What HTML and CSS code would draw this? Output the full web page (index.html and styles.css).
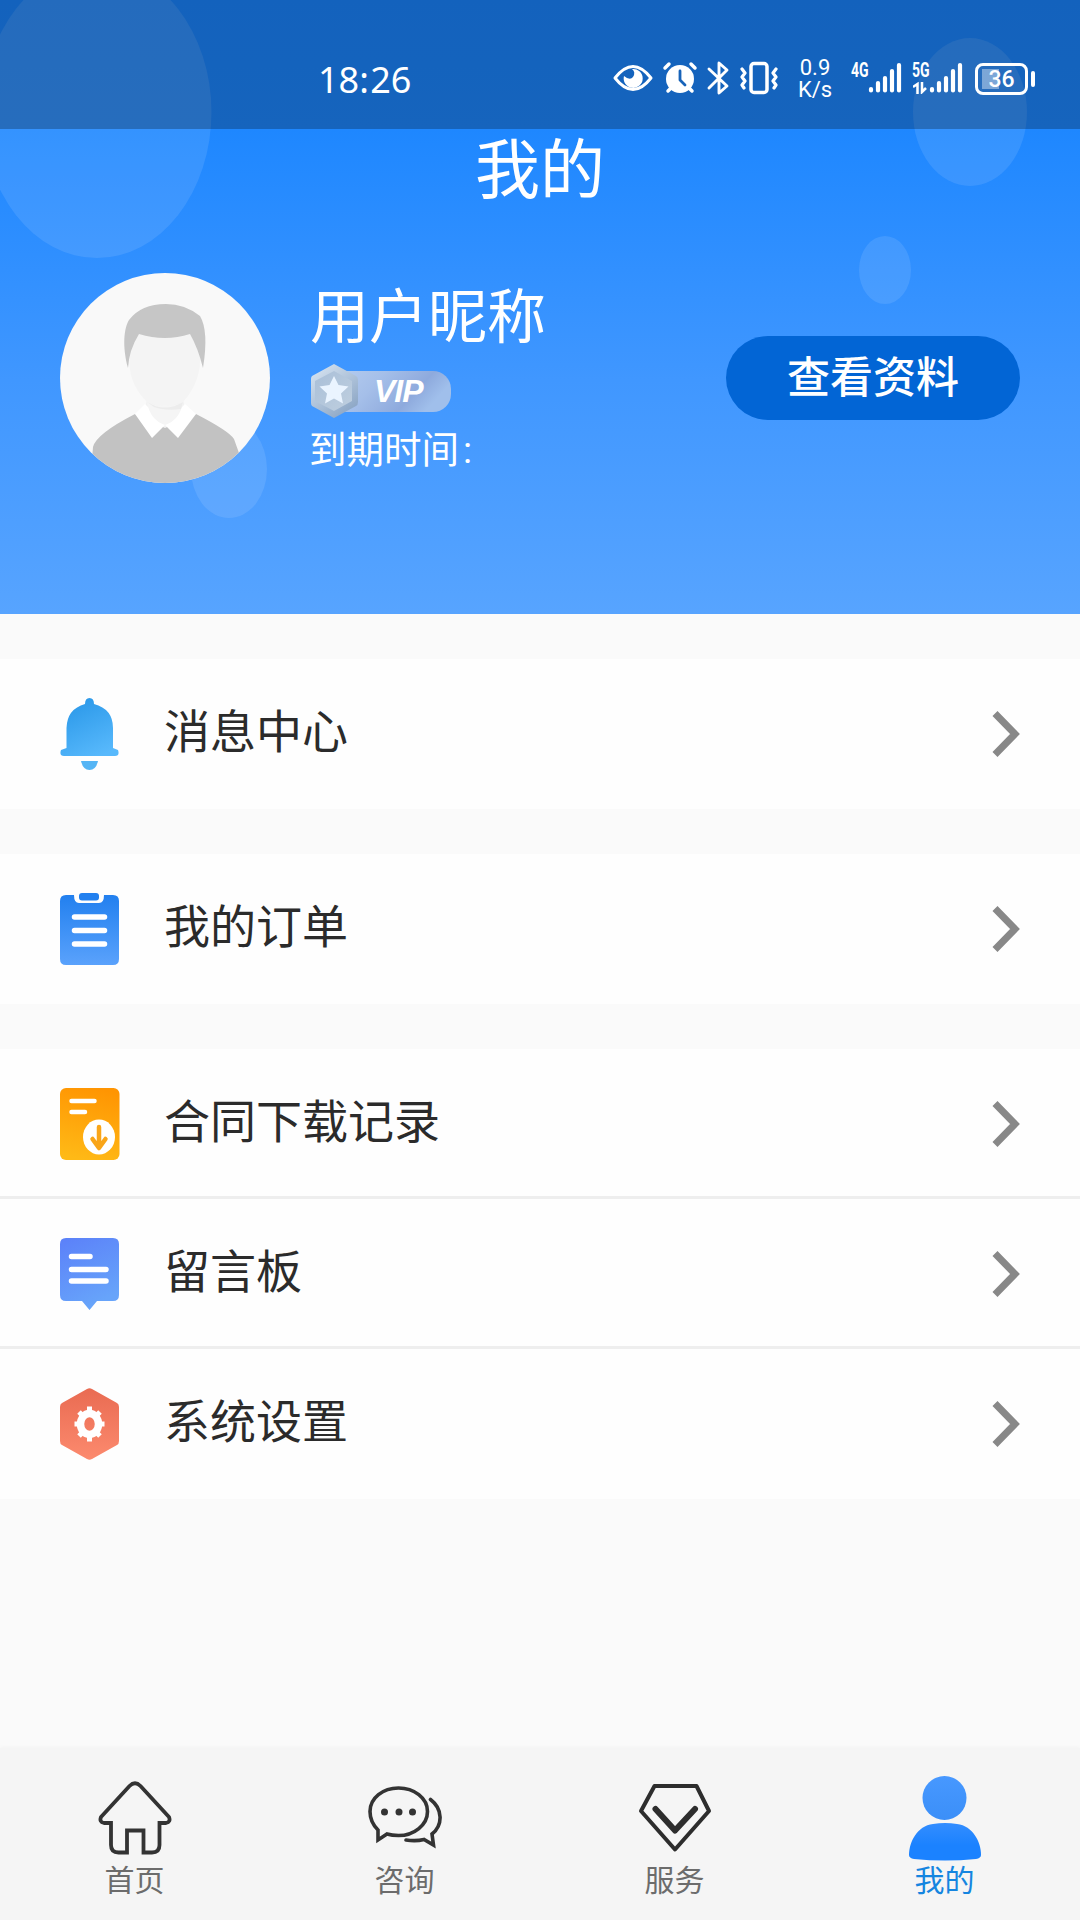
FILE: index.html
```html
<!DOCTYPE html>
<html lang="zh-CN">
<head>
<meta charset="UTF-8">
<title>我的</title>
<link rel="stylesheet" href="styles.css">
</head>
<body>
<div class="screen">
  <header class="hero">
    <svg class="bubbles" viewBox="0 0 1080 614" fill="#fff" fill-opacity=".1">
      <ellipse cx="97" cy="112" rx="114.500" ry="146"/>
      <ellipse cx="970" cy="112" rx="57" ry="74"/>
      <ellipse cx="885" cy="270" rx="26" ry="34"/>
      <ellipse cx="229" cy="469" rx="38" ry="49"/>
    </svg>
    <div class="status">
      <span class="clock"><span>18</span><span class="colon">:</span><span>26</span></span>
      <svg class="status-icons" viewBox="0 0 240 80" fill="none" stroke="#fff" stroke-width="3" stroke-linecap="round" stroke-linejoin="round">
        <path d="M15 38Q24 26.500 33 26.500T51 38Q42 49.500 33 49.500T15 38Z"/>
        <path d="M32 29a9.500 9.500 0 1 1-8 7q6 5 9 1 3-5-1-8Z" fill="#fff" stroke="none"/>
        <circle cx="80" cy="39" r="14" fill="#fff" stroke="none"/>
        <path d="M65 28l4-4M95 28l-4-4M68 51l3-3M92 51l-3-3" stroke-width="3.500"/>
        <path d="M80 31v9l5 5" stroke="#1763b9" stroke-width="2.800"/>
        <path d="M109 29l18 17-8 7V23l8 7-18 18" stroke-width="2.900"/>
        <rect x="151" y="23.500" width="16" height="29" rx="3" stroke-width="3.500"/>
        <path d="M142 29l3 4-3 4 3 4-3 4 2 3M176 29l-3 4 3 4-3 4 3 4-2 3" stroke-width="3.200"/>
      </svg>
      <div class="speed"><span>0.9</span><span>K/s</span></div>
      <div class="signal">
        <span class="net">4G</span>
        <svg class="bars" viewBox="0 0 36 36" stroke="#fff" stroke-width="4.200" stroke-linecap="round"><path d="M3 31v1.500M10 25v7.500M17 20v12.500M24 13v19.500M31 7v25.500"/></svg>
      </div>
      <div class="signal signal-5g">
        <span class="net">5G</span>
        <svg class="bars" viewBox="0 0 36 36" stroke="#fff" stroke-width="4.200" stroke-linecap="round"><path d="M3 31v1.500M10 25v7.500M17 20v12.500M24 13v19.500M31 7v25.500"/></svg>
        <svg class="updown" viewBox="0 0 14 12" fill="none" stroke="#fff" stroke-width="2.500"><path d="M0 5l4.500-3v10M9 0v10l4-4"/></svg>
      </div>
      <div class="battery"><span class="cell">36</span><span class="cap"></span></div>
    </div>
    <h1 class="title">我的</h1>
    <div class="profile">
      <svg class="avatar" viewBox="0 0 210 210">
        <defs><clipPath id="face"><circle cx="105" cy="105" r="105"/></clipPath></defs>
        <g clip-path="url(#face)">
          <rect width="210" height="210" fill="#f9f9f9"/>
          <path d="M87 127q18 11 36 0l4 15-22 18-22-18Z" fill="#f2f2f2"/>
          <path d="M70 80Q70 55 105 55T140 80Q142 108 123 129Q105 136 87 129Q66 108 70 80Z" fill="#f4f4f4"/>
          <path d="M68 95C62 73 64 55 69 47Q81 31 106 31 125 31 140 43 149 58 143 95 138 75 130 61 105 69 79 61 69 77 68 95Z" fill="#c6c6c6"/>
          <path d="M30 210L33 174Q36 161 75 141L105 155 136 141Q169 158 174 166L179 180V210Z" fill="#c2c2c2"/>
          <path d="M75 141l10-10 20 20 20-20 11 10-18 24-13-13-13 13Z" fill="#fff"/>
          <path d="M87 129q18 8 36 0-3 18-18 23-15-5-18-23Z" fill="#f5f5f5"/>
          <path d="M87 129q18 11 36 0l-2 7q-16 2-27-2Z" fill="#ececec"/>
        </g>
      </svg>
      <div class="who">
        <div class="nick">用户昵称</div>
        <div class="vip">
          <svg viewBox="0 0 142 56">
            <defs>
              <linearGradient id="pill" x2="1" y2=".3"><stop stop-color="#b9cfef"/><stop offset=".45" stop-color="#a5bfe9"/><stop offset=".8" stop-color="#8eaadd"/><stop offset="1" stop-color="#a0bfeb"/></linearGradient>
              <linearGradient id="hex" x2=".7" y2="1"><stop stop-color="#dce8f4"/><stop offset="1" stop-color="#8ca6c5"/></linearGradient>
              <linearGradient id="hexIn" y2="1"><stop stop-color="#a9bfd8"/><stop offset="1" stop-color="#bfcfdf"/></linearGradient>
            </defs>
            <rect x="14" y="8" width="127" height="41" rx="18" fill="url(#pill)"/>
            <path d="M24 1L46 13Q48 14 48 17V39Q48 42 46 43L24 55 2 43Q1 42 1 40V16Q1 14 2 13Z" fill="url(#hex)"/>
            <path d="M24 8L42 18V38L24 48 5 38V18Z" fill="url(#hexIn)"/>
            <path d="M24 13l4.500 9 10 1.500-7.500 7 2 10-9-5-9 5 2-10-7.500-7 10-1.500Z" fill="#eaf4ff"/>
          </svg>
          <span class="vip-text">VIP</span>
        </div>
        <div class="expiry">到期时间<span>:</span></div>
      </div>
      <button class="view">查看资料</button>
    </div>
  </header>

  <main class="menu">
    <section class="group">
      <a class="row">
        <svg class="icon" viewBox="0 0 60 72">
          <defs><linearGradient id="bell" x1=".2" x2=".7" y2="1"><stop stop-color="#2997e8"/><stop offset="1" stop-color="#58b9fc"/></linearGradient></defs>
          <path d="M25 6Q25 0 29.500 0T34 6Q53 11 53 30V50L58 52Q60 58 55 58H4Q-1 58 1 52L6.500 50V30Q7 11 25 6Z" fill="url(#bell)"/>
          <path d="M21 63H38Q36 72 29.500 72T21 63Z" fill="#55b5f5"/>
        </svg>
        <span class="label">消息中心</span>
        <svg class="chevron" viewBox="0 0 30 48"><path d="M5 3.500L25 24 5 44.500"/></svg>
      </a>
    </section>
    <section class="group">
      <a class="row">
        <svg class="icon" viewBox="0 0 60 72">
          <defs><linearGradient id="order" x2="0" y2="1"><stop stop-color="#2280ef"/><stop offset="1" stop-color="#5aa2fc"/></linearGradient></defs>
          <path d="M6 2H14Q14 10 19 10H39Q44 10 44 2H53Q59 2 59 8V66Q59 72 53 72H6Q0 72 0 66V8Q0 2 6 2Z" fill="url(#order)"/>
          <rect x="19" y="0" width="20" height="7.500" rx="3" fill="#2280ef"/>
          <path d="M14.500 24H44.500M14.500 37.500H44.500M14.500 51H44.500" stroke="#fff" stroke-width="5.500" stroke-linecap="round"/>
        </svg>
        <span class="label">我的订单</span>
        <svg class="chevron" viewBox="0 0 30 48"><path d="M5 3.500L25 24 5 44.500"/></svg>
      </a>
    </section>
    <section class="group">
      <a class="row">
        <svg class="icon" viewBox="0 0 60 72">
          <defs><linearGradient id="contract" x1=".6" x2=".4" y2="1"><stop stop-color="#ff9502"/><stop offset="1" stop-color="#ffb916"/></linearGradient></defs>
          <rect width="59.500" height="72" rx="6" fill="url(#contract)"/>
          <path d="M11.500 13H34.500M11.500 24H25" stroke="#fff" stroke-width="4.500" stroke-linecap="round"/>
          <ellipse cx="39" cy="49" rx="16" ry="17.500" fill="#fff"/>
          <path d="M39 39V59M32.500 51L39 60 45.500 51" fill="none" stroke="#f9a518" stroke-width="4.500" stroke-linecap="round" stroke-linejoin="round"/>
        </svg>
        <span class="label">合同下载记录</span>
        <svg class="chevron" viewBox="0 0 30 48"><path d="M5 3.500L25 24 5 44.500"/></svg>
      </a>
      <a class="row">
        <svg class="icon" viewBox="0 0 60 72">
          <defs><linearGradient id="board" x2=".4" y2="1"><stop stop-color="#5b80f9"/><stop offset="1" stop-color="#67a4fa"/></linearGradient></defs>
          <path d="M6 0H53Q59 0 59 6V57Q59 63 53 63H37L29.500 72 22 63H6Q0 63 0 57V6Q0 0 6 0Z" fill="url(#board)"/>
          <path d="M11.500 18.500H30M11.500 31.500H46M11.500 43H46" stroke="#fff" stroke-width="5.500" stroke-linecap="round"/>
        </svg>
        <span class="label">留言板</span>
        <svg class="chevron" viewBox="0 0 30 48"><path d="M5 3.500L25 24 5 44.500"/></svg>
      </a>
      <a class="row">
        <svg class="icon" viewBox="0 0 60 72">
          <defs><linearGradient id="setting" x2="0" y2="1"><stop stop-color="#e96b52"/><stop offset="1" stop-color="#fc8a6e"/></linearGradient></defs>
          <path d="M27 1Q29.500-.5 32 1L57 15Q59 16 59 19V53Q59 56 57 57L32 71Q29.500 72.500 27 71L2 57Q0 56 0 53V19Q0 16 2 15Z" fill="url(#setting)"/>
          <g fill="none" stroke="#fff">
            <ellipse cx="29.500" cy="36" rx="9" ry="10.500" stroke-width="7.500"/>
            <path d="M29.500 18.500v5M29.500 48.500v5M14.500 36h4M40.500 36h4M19 24l4 4M40 24l-4 4M19 48l4-4M40 48l-4-4" stroke-width="5"/>
          </g>
        </svg>
        <span class="label">系统设置</span>
        <svg class="chevron" viewBox="0 0 30 48"><path d="M5 3.500L25 24 5 44.500"/></svg>
      </a>
    </section>
  </main>

  <nav class="tabs">
    <a class="tab">
      <svg class="tab-icon" viewBox="0 0 74 86" fill="none" stroke="#333" stroke-width="3.800">
        <path d="M31.500 10Q37 4.500 42.500 10L71 41Q73 46 68 47H61.500V69Q61.500 76.500 54 76.500H45.500V54.500H29V76.500H20.500Q13 76.500 13 69V47H6Q1 46 3 41Z"/>
      </svg>
      <span>首页</span>
    </a>
    <a class="tab">
      <svg class="tab-icon" viewBox="0 0 74 86" fill="none" stroke="#333" stroke-width="3.600" stroke-linecap="round">
        <path d="M10 64V54C5 49 2 43 2 35.500 2 22 15 12 30.500 12S59.500 22 59.500 35.500 46 59.500 30.500 59.500Q24 59.500 19 58Z"/>
        <path d="M62.500 23.500C75 33 75 49 64 58L65.500 69 56 63.500Q48 65.500 38 64"/>
        <g fill="#333" stroke="none"><circle cx="16.500" cy="36" r="3.500"/><circle cx="31" cy="36" r="3.500"/><circle cx="44.500" cy="36" r="3.500"/></g>
      </svg>
      <span>咨询</span>
    </a>
    <a class="tab">
      <svg class="tab-icon" viewBox="0 0 74 86" fill="none" stroke="#2d2d2d" stroke-width="4" stroke-linejoin="round">
        <path d="M16.500 10H58.500L71 35 37 73.500 3 35Z"/>
        <path d="M17.500 33L37 54.500 57 33" stroke-width="6" stroke-linecap="round"/>
      </svg>
      <span>服务</span>
    </a>
    <a class="tab active">
      <svg class="tab-icon" viewBox="0 0 74 86">
        <defs>
          <linearGradient id="me" x2="0" y2="1"><stop stop-color="#4798ff"/><stop offset="1" stop-color="#3b8ff8"/></linearGradient>
          <linearGradient id="meBody" x2="0" y2="1"><stop stop-color="#338dff"/><stop offset=".6" stop-color="#1b82ff"/></linearGradient>
        </defs>
        <circle cx="36.500" cy="22" r="22" fill="url(#me)"/>
        <path d="M25 48Q37 46 49 48C65 50 73 66 73 79Q73 82 68 83Q37 86 6 83Q1 82 1 79C1 66 9 50 25 48Z" fill="url(#meBody)"/>
      </svg>
      <span>我的</span>
    </a>
  </nav>
</div>
</body>
</html>
```
FILE: styles.css
```css
* {
  box-sizing: border-box;
}

body {
  margin: 0;
  font-family: Roboto, "Noto Sans CJK SC", sans-serif;
}

.screen {
  display: flex;
  flex-direction: column;
  width: 1080px;
  height: 1920px;
  background: #fafafa;
  overflow: hidden;
}

.hero {
  position: relative;
  height: 614px;
  color: #fff;
  background: linear-gradient(#1a85ff 0, #1e87ff 129px, #4097ff 380px, #57a4ff 614px);
}

.bubbles {
  position: absolute;
  inset: 0;
  width: 1080px;
  height: 614px;
}

/* status bar */
.status {
  position: relative;
  display: flex;
  height: 129px;
  padding: 40px 0 0 318px;
  background: rgba(0, 0, 0, .26);
}

.clock {
  display: flex;
  width: 282px;
  font-size: 36px;
  line-height: 80px;
  font-family: "Noto Sans", sans-serif;
}

.colon {
  width: 11px;
}

.status-icons {
  flex: none;
  width: 240px;
  height: 80px;
  margin-right: -44px;
}

.speed {
  display: flex;
  flex-direction: column;
  width: 38px;
  padding-top: 17px;
  font-size: 22px;
  line-height: 21.500px;
  text-align: center;
}

.signal {
  position: relative;
  width: 51px;
  margin: 21px 0 0 17px;
  height: 36px;
}

.signal-5g {
  margin-left: 10px;
}

.bars {
  width: 36px;
  height: 36px;
  margin: -3px 0 0 17px;
}

.net {
  position: absolute;
  left: 0;
  top: 0;
  font-size: 20px;
  line-height: 18px;
  font-weight: 700;
  transform: scaleX(.7);
  transform-origin: left;
}

.updown {
  position: absolute;
  left: 1px;
  top: 21px;
  width: 14px;
  height: 12px;
}

.battery {
  display: flex;
  align-items: center;
  gap: 3px;
  height: 32px;
  margin: 23px 0 0 12px;
}

.cell {
  width: 53px;
  height: 32px;
  border: 3px solid #fff;
  border-radius: 8px;
  background: linear-gradient(90deg, rgba(255, 255, 255, .4) 17px, transparent 17px) 4px 3px / 40px 20px no-repeat;
  font-size: 23px;
  line-height: 27px;
  font-weight: 500;
  text-align: center;
}

.cap {
  width: 4px;
  height: 16px;
  border-radius: 2px;
  background: #fff;
}

/* profile */
.title {
  margin: 0;
  padding-top: 2px;
  font-size: 65px;
  line-height: 80px;
  font-weight: 400;
  text-align: center;
}

.title,
.profile {
  position: relative;
}

.profile {
  display: flex;
  padding: 62px 60px 0;
}

.avatar {
  width: 210px;
  height: 210px;
}

.who {
  display: flex;
  flex-direction: column;
  width: 456px;
  padding: 9px 0 0 40px;
}

.nick {
  font-size: 59px;
  line-height: 72px;
}

.vip {
  position: relative;
  width: 142px;
  height: 56px;
  margin-top: 9px;
}

.vip svg {
  display: block;
  width: 142px;
  height: 56px;
}

.vip-text {
  position: absolute;
  left: 64px;
  top: 8px;
  font: italic 700 32px/41px "Liberation Sans", sans-serif;
  letter-spacing: -1px;
}

.expiry {
  margin: 8px 0 0 -1px;
  font-size: 37.500px;
  line-height: 46px;
}

.expiry span {
  margin-left: 4px;
}

.view {
  width: 294px;
  height: 84px;
  margin: 63px 0 0;
  padding: 0 0 7px;
  border: 0;
  border-radius: 42px;
  background: #0265d5;
  color: #fff;
  font: 500 43px/77px "Noto Sans CJK SC", sans-serif;
}

/* menu */
.menu {
  flex: 1;
  display: flex;
  flex-direction: column;
  gap: 45px;
  padding-top: 45px;
}

.group {
  background: #fefefe;
}

.row {
  display: flex;
  align-items: center;
  height: 150px;
  padding: 0 60px;
}

.row:not(:last-child) {
  box-shadow: inset 0 -3px #eee;
}

.icon {
  width: 60px;
  height: 72px;
}

.label {
  flex: 1;
  margin: -4px 0 0 44px;
  font-size: 46px;
  line-height: 60px;
  color: #2b2b2b;
}

.chevron {
  width: 30px;
  height: 48px;
  fill: none;
  stroke: #888;
  stroke-width: 7;
}

/* bottom tabs */
.tabs {
  display: flex;
  height: 172px;
  background: #f5f5f5;
  box-shadow: 0 -1px 4px rgba(0, 0, 0, .03);
}

.tab {
  flex: 1;
  display: flex;
  flex-direction: column;
  align-items: center;
  padding: 28px 1px 0 0;
  font-size: 30px;
  line-height: 36px;
  color: #6c6c6c;
}

.tab-icon {
  width: 74px;
  height: 86px;
  margin-bottom: 1px;
}

.active {
  color: #1585e0;
}
```
